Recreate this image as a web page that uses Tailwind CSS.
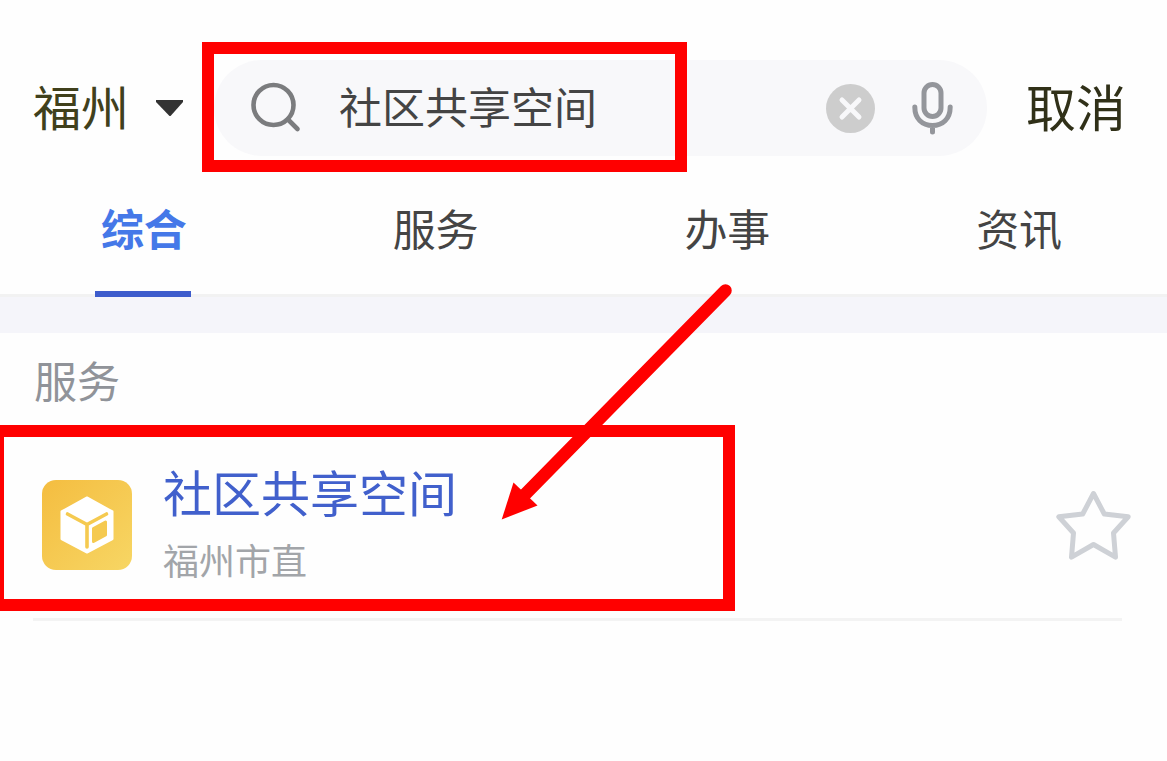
<!DOCTYPE html>
<html lang="zh-CN">
<head>
<meta charset="utf-8">
<meta name="viewport" content="width=device-width, initial-scale=1">
<title>社区共享空间</title>
<script src="https://cdn.jsdelivr.net/npm/@tailwindcss/browser@4"></script>
</head>
<body class="relative min-h-screen overflow-x-hidden bg-[#fefefe] font-['Noto_Sans_CJK_SC','Noto_Sans',sans-serif] text-[#444444]">
<header class="flex items-center pt-[60px] pr-[41px] pl-[33px]">
  <button type="button" class="flex h-24 shrink-0 items-center gap-[27px] text-[48px] leading-none text-[#40401c]">
    <span class="pb-[6px]">福州</span>
    <svg class="h-4 w-[27px]" viewBox="0 0 27 16" fill="#333333" aria-hidden="true"><path d="M0 0H27V2L15 15.500Q14 16.500 13 15.500L0 2Z"/></svg>
  </button>
  <form role="search" class="ml-[31px] flex h-24 min-w-0 flex-1 items-center rounded-full bg-[#f8f8fa] pr-[34px] pl-[36px]">
    <svg class="h-[52px] w-[52px] shrink-0" viewBox="0 0 52 52" fill="none" stroke="#7b7c7e" stroke-width="4.600" stroke-linecap="round" aria-hidden="true"><circle cx="23.500" cy="23" r="20"/><path d="M38 37.500L47.500 47"/></svg>
    <input type="text" aria-label="搜索" value="社区共享空间" class="ml-[37px] h-16 min-w-0 flex-1 bg-transparent pb-[6px] text-[43px] text-[#444444] outline-none">
    <button type="button" aria-label="清除" class="shrink-0">
      <svg class="h-[49px] w-[49px]" viewBox="0 0 49 49"><circle cx="24.500" cy="24.500" r="24.500" fill="#cdcdcd"/><path d="M16 16L33 33M33 16L16 33" stroke="#f8f8fa" stroke-width="5" stroke-linecap="round"/></svg>
    </button>
    <button type="button" aria-label="语音输入" class="ml-[37px] shrink-0">
      <svg class="h-[53px] w-[41px]" viewBox="0 0 41 53" fill="none" stroke="#94969b" stroke-width="5" stroke-linecap="round"><rect x="12" y="2.500" width="17" height="32" rx="8.500"/><path d="M2.800 25C2.800 37 10.500 43.500 20.500 43.500S38.200 37 38.200 25M20.500 43.500V50"/></svg>
    </button>
  </form>
  <button type="button" class="ml-[39px] h-24 shrink-0 pb-[6px] text-[50px] leading-none text-[#303018]">取消</button>
</header>

<nav class="flex border-b-3 border-[#f2f2f2] text-[43px] leading-none" aria-label="搜索分类">
  <button type="button" aria-current="page" class="relative h-[138px] flex-1 pt-1 pr-[4px] font-bold text-[#4578e8]">综合<span class="absolute -bottom-[3px] left-1/2 -ml-[51px] h-[6px] w-24 bg-[#3d5ccc]"></span></button>
  <button type="button" class="h-[138px] flex-1 pt-1 pr-[4px]">服务</button>
  <button type="button" class="h-[138px] flex-1 pt-1 pr-[4px]">办事</button>
  <button type="button" class="h-[138px] flex-1 pt-1 pr-[4px]">资讯</button>
</nav>
<div class="h-9 bg-[#f5f5fa]"></div>

<main>
  <h2 class="pb-[6px] pl-[34px] text-[43px] leading-[92px] text-[#909399]">服务</h2>
  <article class="mr-[45px] ml-[33px] flex h-[190px] items-center border-b-3 border-[#f3f3f3] pl-[9px]">
    <svg class="h-[90px] w-[90px] shrink-0" viewBox="0 0 90 90" aria-hidden="true">
      <defs><linearGradient id="gold" x1="0" y1="0" x2="1" y2="1"><stop offset="0" stop-color="#f4bd40"/><stop offset="1" stop-color="#f7d664"/></linearGradient></defs>
      <rect width="90" height="90" rx="14" fill="url(#gold)"/>
      <path d="M45 17.500L70.500 31.500V59L45 72.500L19.500 59V31.500Z" fill="#fff" stroke="#fff" stroke-width="2" stroke-linejoin="round"/>
      <path d="M25.500 34L45 44.500L64.500 34M45 44.500V67" fill="none" stroke="#f5ca50" stroke-width="3.600" stroke-linecap="round" stroke-linejoin="round"/>
      <path d="M51.500 48.500L63.500 42V55L51.500 61.500Z" fill="#f5ca50" stroke="#f5ca50" stroke-width="3" stroke-linejoin="round"/>
    </svg>
    <div class="ml-[31px] min-w-0 flex-1">
      <h3 class="text-[49px] leading-[68px]"><a href="#" class="text-[#4160cc]">社区共享空间</a></h3>
      <p class="text-[36px] leading-[68px] text-[#a2a5a9]">福州市直</p>
    </div>
    <button type="button" aria-label="收藏" class="-mr-[9px] shrink-0">
      <svg class="h-[70px] w-[75px]" viewBox="0 0 75 70" fill="none" stroke="#ced1d6" stroke-width="5" stroke-linejoin="round"><path d="M37.500 3.500L48.300 24L72.200 26.800L57.500 43L59.500 67.200L37.500 54.500L15.500 67.200L17.500 43L2.800 26.800L26.700 24Z"/></svg>
    </button>
  </article>
</main>

<div class="pointer-events-none absolute top-[42px] left-[202px] h-[130px] w-[485px] border-12 border-[#ff0000]"></div>
<div class="pointer-events-none absolute top-[425px] -left-2 h-[186px] w-[743px] border-12 border-[#ff0000]"></div>
<svg class="pointer-events-none absolute top-[280px] left-[500px] h-[240px] w-[240px]" viewBox="500 280 240 240" aria-hidden="true"><path d="M725.500 290.500L524 495.500" stroke="#ff0000" stroke-width="12.500" stroke-linecap="round"/><path d="M501.700 519.500L513.500 482.500L537.500 505.500Z" fill="#ff0000"/></svg>
</body>
</html>
